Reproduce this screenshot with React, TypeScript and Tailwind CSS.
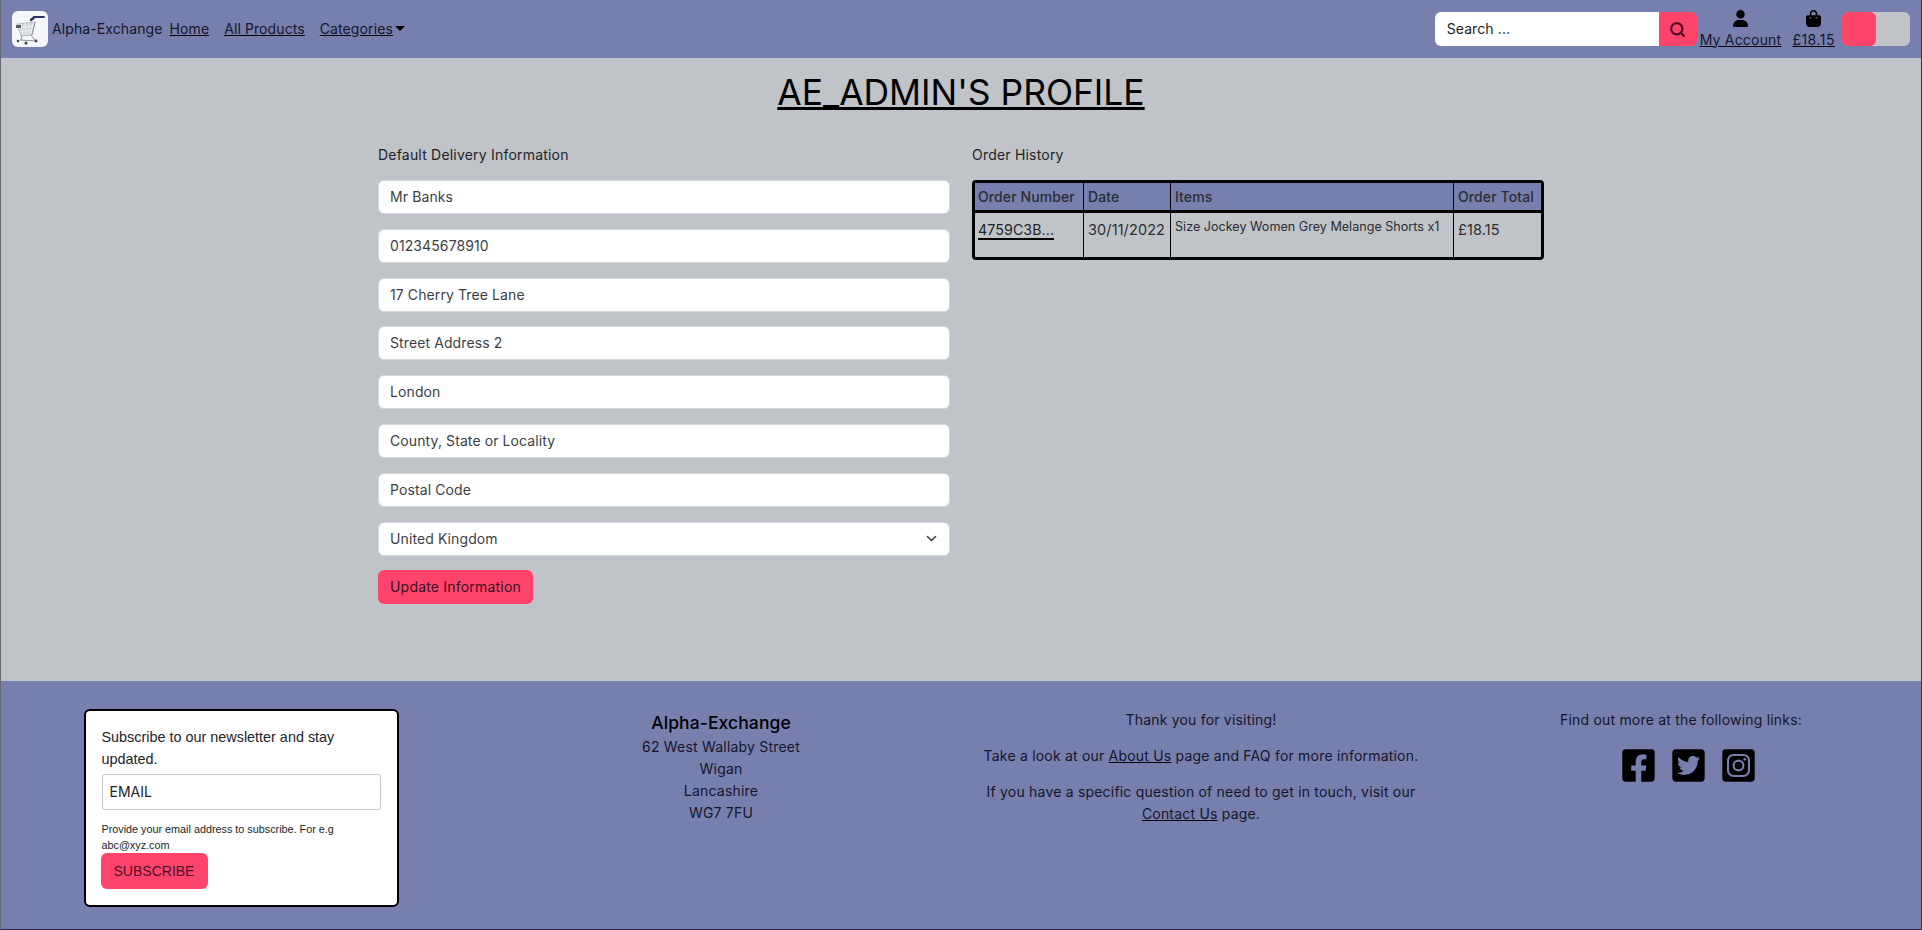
import { Search } from 'lucide-react';
import { FaFacebookSquare, FaInstagramSquare, FaTwitterSquare } from 'react-icons/fa';
import { FaBagShopping, FaUser } from 'react-icons/fa6';

const fields = [
  'Mr Banks',
  '012345678910',
  '17 Cherry Tree Lane',
  'Street Address 2',
  'London',
  'County, State or Locality',
  'Postal Code',
];

function CartLogo() {
  return (
    <div className="h-9 w-9 rounded-md bg-[#f4f6fa] overflow-hidden">
      <svg viewBox="0 0 36 36" className="h-9 w-9" fill="none">
        <path d="M19 9l3-2.500" stroke="#2b3468" strokeWidth="2.500" strokeLinecap="round" />
        <path d="M22 6h10" stroke="#2b3468" strokeWidth="1.800" strokeLinecap="round" />
        <path d="M5 13l18-2-3 13-11 1z" fill="#d4d7db" stroke="#a4a8ae" strokeWidth="0.800" />
        <path d="M9 12.500l2 12M13 12l1 12.500M17 11.500l0 12.500M21 11.500l-2 12M6 17l16-2M7 21l14-2" stroke="#f4f6fa" strokeWidth="0.700" />
        <rect x="4" y="14" width="5" height="3" fill="#5a5f66" />
        <path d="M10 25l-1 4M19 24l4 5M8 29l16 1M23 11l-3 13" stroke="#8d9197" strokeWidth="1" />
        <circle cx="6" cy="30" r="1.300" fill="#3c4047" />
        <circle cx="14" cy="32" r="1.500" fill="#3c4047" />
        <circle cx="24" cy="30" r="1.400" fill="#3c4047" />
      </svg>
    </div>
  );
}

function Header() {
  return (
    <header className="h-[58px] bg-[#767fae] flex items-center justify-between pl-[11px] pr-[11px] text-sm text-[#14162b]">
      <div className="flex items-center">
        <CartLogo />
        <span className="ml-1">Alpha-Exchange</span>
        <nav className="flex items-center ml-[7px] gap-[15px]">
          <a className="underline decoration-black">Home</a>
          <a className="underline decoration-black">All Products</a>
          <a className="flex items-center">
            <span className="underline decoration-black">Categories</span>
            <span className="ml-[2px] mb-[2px] border-x-[5px] border-t-[5px] border-x-transparent border-t-black" />
          </a>
        </nav>
      </div>
      <div className="flex items-center">
        <div className="flex h-[34px] w-[262px] rounded-md overflow-hidden">
          <div className="flex-1 bg-white flex items-center px-3 text-[#212529]">Search ...</div>
          <div className="w-[38px] bg-[#ff446c] flex items-center justify-center text-[#4a0820]">
            <Search size={17} strokeWidth={3} />
          </div>
        </div>
        <a className="ml-[3px] flex flex-col items-center tracking-[0.2px]">
          <FaUser className="text-[17px] text-black mb-[3px]" />
          <span className="underline decoration-black leading-[19px]">My Account</span>
        </a>
        <a className="ml-[11px] flex flex-col items-center tracking-[0.5px]">
          <FaBagShopping className="text-[17px] text-black mb-[3px]" />
          <span className="underline decoration-black leading-[19px]">£18.15</span>
        </a>
        <div className="ml-[7px] h-[34px] w-[68px] rounded-md bg-[#c0c4c9]">
          <div className="h-[34px] w-[34px] rounded-md bg-[#ff446c]" />
        </div>
      </div>
    </header>
  );
}

function DeliveryForm() {
  return (
    <section className="w-[572px]">
      <h2 className="text-sm leading-5 tracking-[0.2px] text-[#212529] mb-[15px]">Default Delivery Information</h2>
      <div className="flex flex-col gap-[14.800px]">
        {fields.map((value) => (
          <div key={value} className="h-[34px] rounded-md bg-white flex items-center px-[11px] text-sm text-[#3b3f45] border border-[#d5d8dc]">
            {value}
          </div>
        ))}
        <div className="h-[34px] rounded-md bg-white flex items-center justify-between px-[11px] text-sm text-[#3b3f45] border border-[#d5d8dc]">
          United Kingdom
          <svg viewBox="0 0 16 16" className="h-[13px] w-[13px]" fill="none" stroke="#343a40" strokeWidth="1.800" strokeLinecap="round" strokeLinejoin="round">
            <path d="M3 5.500l5 5 5-5" />
          </svg>
        </div>
      </div>
      <button className="mt-[14px] h-[34px] px-3 rounded-md bg-[#ff446c] text-sm tracking-[0.2px] text-[#3a1020]">Update Information</button>
    </section>
  );
}

function OrderHistory() {
  return (
    <section className="w-[572px]">
      <h2 className="text-sm leading-5 tracking-[0.2px] text-[#212529] mb-[15px]">Order History</h2>
      <div className="rounded-[4px] border-[3px] border-black overflow-hidden text-[#2a2d33]">
        <div className="grid grid-cols-[109px_87px_283px_1fr] h-[30px] bg-[#767fae] border-b-[3px] border-black text-sm font-medium">
          <div className="pl-[3px] flex items-center border-r border-black">Order Number</div>
          <div className="px-1 flex items-center border-r border-black">Date</div>
          <div className="px-1 flex items-center border-r border-black">Items</div>
          <div className="px-1 flex items-center">Order Total</div>
        </div>
        <div className="grid grid-cols-[109px_87px_283px_1fr] h-[44px] text-[14.500px]">
          <div className="pl-[3px] pt-[6px] border-r border-black">
            <a className="text-[14.200px] text-[#212529] border-b-2 border-black">4759C3B...</a>
          </div>
          <div className="px-1 pt-[6px] border-r border-black">30/11/2022</div>
          <div className="px-1 pt-[5px] border-r border-black text-[12.600px] tracking-normal">Size Jockey Women Grey Melange Shorts x1</div>
          <div className="px-1 pt-[6px]">£18.15</div>
        </div>
      </div>
    </section>
  );
}

function Footer() {
  return (
    <footer className="h-[248px] bg-[#767fae] grid grid-cols-4 text-sm tracking-[0.2px] text-[#14162b]">
      <div className="pt-[28px] flex justify-center">
        <div className="h-[198px] w-[315px] rounded-md border-2 border-black bg-white px-4 pt-[15px] text-[#212529] font-['Liberation_Sans',sans-serif] tracking-normal">
          <p className="text-[14.400px] leading-[22px]">Subscribe to our newsletter and stay updated.</p>
          <div className="mt-[4px] h-9 rounded-[3px] border border-[#c0c7d0] flex items-center px-[7px] text-[#212529] font-['Inter',sans-serif]">EMAIL</div>
          <p className="mt-[11px] text-[10.800px] leading-4">Provide your email address to subscribe. For e.g abc@xyz.com</p>
          <button className="-ml-px h-9 w-[107px] rounded-md bg-[#ff446c] text-[#4a1028]">SUBSCRIBE</button>
        </div>
      </div>
      <div className="pt-[30px] text-center leading-[22px]">
        <h3 className="text-[17.500px] font-medium leading-[24px] tracking-[0.1px] text-black mb-[1px]">Alpha-Exchange</h3>
        <p>62 West Wallaby Street</p>
        <p>Wigan</p>
        <p>Lancashire</p>
        <p>WG7 7FU</p>
      </div>
      <div className="pt-[28px] text-center leading-[22px] px-[15px]">
        <p className="mb-[14px]">Thank you for visiting!</p>
        <p className="mb-[14px]">Take a look at our <a className="underline decoration-black">About Us</a> page and FAQ for more information.</p>
        <p className="px-[8px]">If you have a specific question of need to get in touch, visit our <a className="underline decoration-black">Contact Us</a> page.</p>
      </div>
      <div className="pt-[28px] text-center leading-[22px]">
        <p>Find out more at the following links:</p>
        <div className="mt-[16px] ml-[14px] flex justify-center gap-[13px] text-[37px] text-black">
          <FaFacebookSquare />
          <FaTwitterSquare />
          <FaInstagramSquare />
        </div>
      </div>
    </footer>
  );
}

export default function App() {
  return (
    <div className="h-[930px] flex flex-col bg-[#c0c4c9] font-['Inter',sans-serif] tracking-[0.1px] overflow-hidden border-l border-l-[#666a70] border-r border-r-[#3d3338] border-b border-b-[#2e2550]">
      <Header />
      <main className="flex-1 flex flex-col items-center">
        <h1 className="mt-[13px] text-[35.400px] leading-[43px] tracking-normal text-black underline uppercase">AE_Admin's Profile</h1>
        <div className="mt-[31px] flex gap-[22px]">
          <DeliveryForm />
          <OrderHistory />
        </div>
      </main>
      <Footer />
    </div>
  );
}
